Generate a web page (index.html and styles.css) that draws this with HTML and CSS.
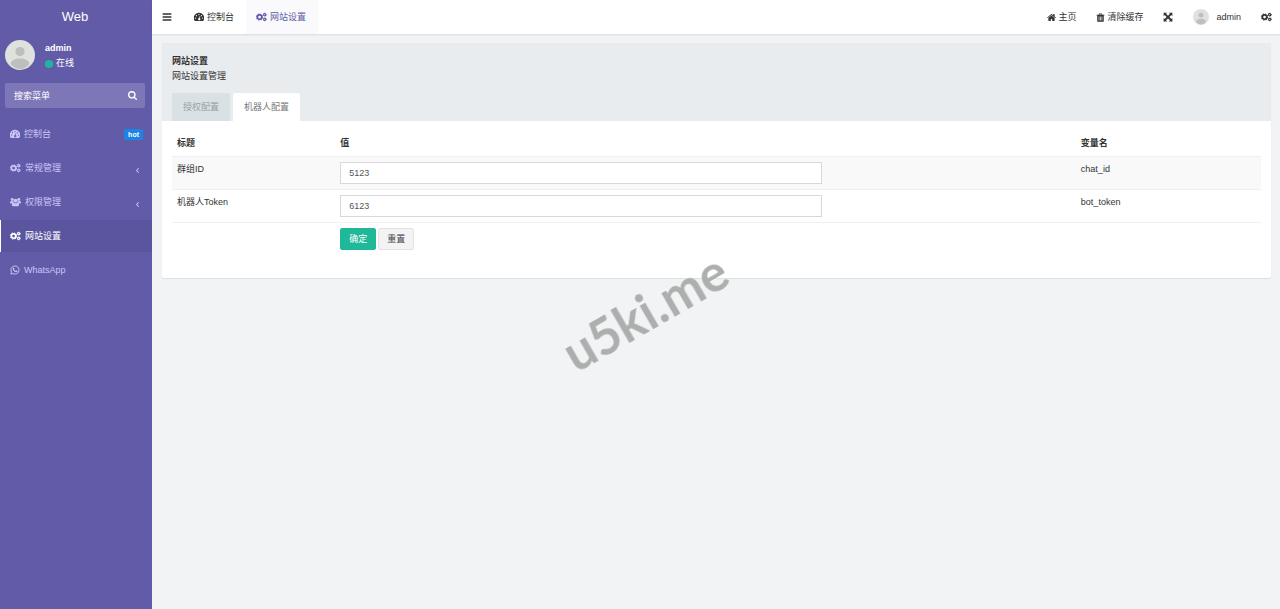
FILE: index.html
```
<!DOCTYPE html>
<html lang="zh-CN">
<head>
<meta charset="UTF-8">
<meta name="viewport" content="width=device-width, initial-scale=1.0">
<title>网站设置</title>
<link rel="stylesheet" href="styles.css">
</head>
<body>
<svg class="sprite" aria-hidden="true">
  <symbol id="i-bars" viewBox="0 0 16 16"><path d="M1 2h14v2.400H1zM1 6.800h14v2.400H1zM1 11.600h14V14H1z"/></symbol>
  <symbol id="i-dash" viewBox="0 0 18 16"><path fill-rule="evenodd" d="M9 .5a9 9 0 0 0-7.500 14.500h15A9 9 0 0 0 9 .5zM9 2.500a1.100 1.100 0 1 1 0 2.200 1.100 1.100 0 0 1 0-2.200zM4.500 4.500a1.100 1.100 0 1 1 0 2.200 1.100 1.100 0 0 1 0-2.200zM2.800 8.800a1.100 1.100 0 1 1 0 2.200 1.100 1.100 0 0 1 0-2.200zM15.200 8.800a1.100 1.100 0 1 1 0 2.200 1.100 1.100 0 0 1 0-2.200zM13.500 4.500a1.100 1.100 0 1 1 0 2.200 1.100 1.100 0 0 1 0-2.200zM10.300 6.200l1.100.3-.9 3.700a2 2 0 1 1-1.200-.3z"/></symbol>
  <symbol id="i-cogs" viewBox="0 0 20 16">
    <g fill="none" stroke="currentColor">
      <circle cx="6.500" cy="8" r="4" stroke-width="3"/>
      <circle cx="6.500" cy="8" r="5.500" stroke-width="2" stroke-dasharray="2.300 2.020"/>
      <circle cx="15.800" cy="3.800" r="2" stroke-width="2"/>
      <circle cx="15.800" cy="3.800" r="3.100" stroke-width="1.200" stroke-dasharray="1.500 1.740"/>
      <circle cx="15.800" cy="12.200" r="2" stroke-width="2"/>
      <circle cx="15.800" cy="12.200" r="3.100" stroke-width="1.200" stroke-dasharray="1.500 1.740"/>
    </g>
  </symbol>
  <symbol id="i-home" viewBox="64 128 1664 1536"><path d="M1472 992v480q0 26-19 45t-45 19h-384v-384h-256v384h-384q-26 0-45-19t-19-45v-480q0-1 .5-3t.5-3l575-474 575 474q1 2 1 6zm223-69l-62 74q-8 9-21 11h-3q-13 0-21-7l-692-577-692 577q-12 8-24 7-13-2-21-11l-62-74q-8-10-7-23.500t11-21.500l719-599q32-26 76-26t76 26l244 204v-195q0-14 9-23t23-9h192q14 0 23 9t9 23v408l219 182q10 8 11 21.500t-7 23.500z"/></symbol>
  <symbol id="i-trash" viewBox="0 0 16 16"><path fill-rule="evenodd" d="M5.500 1h5l.8 2H15v1.600h-1.200V14q0 1.500-1.300 1.500h-9Q2.200 15.500 2.200 14V4.600H1V3h3.700zM6.400 2.100L6.100 3h3.800l-.3-.9zM4.800 6.200v7h1.200v-7zM7.400 6.200v7h1.200v-7zM10 6.200v7h1.200v-7z"/></symbol>
  <symbol id="i-expand" viewBox="0 0 16 16"><path d="M1 1h5.600L4.900 2.700 8 5.800l3.100-3.100L9.400 1H15v5.600l-1.700-1.700L10.200 8l3.100 3.100L15 9.400V15H9.400l1.700-1.700L8 10.200l-3.100 3.100L6.600 15H1V9.400l1.700 1.700L5.800 8 2.700 4.900 1 6.600z"/></symbol>
  <symbol id="i-search" viewBox="64 128 1664 1664"><path d="M1216 832q0-185-131.500-316.500t-316.500-131.500-316.500 131.500-131.500 316.500 131.500 316.500 316.500 131.500 316.500-131.500 131.500-316.500zm512 832q0 52-38 90t-90 38q-54 0-90-38l-343-342q-179 124-399 124-143 0-273.500-55.500t-225-150-150-225-55.500-273.500 55.500-273.500 150-225 225-150 273.500-55.500 273.500 55.500 225 150 150 225 55.500 273.500q0 220-124 399l343 343q37 37 37 90z"/></symbol>
  <symbol id="i-users" viewBox="0 0 20 16"><circle cx="4" cy="3.500" r="2.700"/><circle cx="16" cy="3.500" r="2.700"/><circle cx="10" cy="5.500" r="3.600"/><path d="M0 9.500Q0 6 2 6q2 1 4 .4 0 1.600 1 2.800-2 0-3 1.500H1.500Q0 10.700 0 9.500zM20 9.500Q20 6 18 6q-2 1-4 .4 0 1.600-1 2.800 2 0 3 1.500h2.500q1.500 0 1.500-1.200zM3.600 13.600q0-4.300 2.900-4.300 3.500 2.200 7 0 2.900 0 2.900 4.300 0 2.200-2.200 2.200H5.800q-2.200 0-2.200-2.200z"/></symbol>
  <symbol id="i-whatsapp" viewBox="0 0 16 16"><path fill="none" stroke="currentColor" stroke-width="1.500" d="M1.400 14.600l.9-3.400A6.500 6.500 0 1 1 4.800 13.700z"/><path d="M5.400 4.300h.9l.8 1.900-.7 1q.9 1.600 2.600 2.300l.9-1 2 1q0 1.900-2 2.100-3.400-.3-5.400-4-.5-2.200.9-3.300z"/></symbol>
  <symbol id="i-left" viewBox="0 0 8 16"><path fill="none" stroke="currentColor" stroke-width="1.800" d="M6 4L2.500 8 6 12"/></symbol>
  <symbol id="i-avatar" viewBox="0 0 30 30"><circle cx="15" cy="15" r="15" fill="#dfe1df"/><circle cx="15" cy="11.500" r="4.600" fill="#bdbfbd"/><path fill="#bdbfbd" d="M5.500 24q1-5.500 9.500-5.500t9.500 5.500q-4 5-9.500 5t-9.500-5z"/></symbol>
</svg>

<div class="wrapper">
  <aside class="sidebar">
    <a class="logo" href="#">Web</a>
    <div class="user-panel">
      <svg class="avatar"><use href="#i-avatar"/></svg>
      <div class="user-info">
        <strong>admin</strong>
        <span class="status">在线</span>
      </div>
    </div>
    <form class="search">
      <input type="text" placeholder="搜索菜单" aria-label="搜索菜单">
      <button type="submit" aria-label="搜索"><svg class="icon icon-sm"><use href="#i-search"/></svg></button>
    </form>
    <nav class="menu">
      <a href="#"><svg class="icon"><use href="#i-dash"/></svg>控制台<span class="badge">hot</span></a>
      <a href="#"><svg class="icon icon-lg"><use href="#i-cogs"/></svg>常规管理<svg class="arrow"><use href="#i-left"/></svg></a>
      <a href="#"><svg class="icon icon-lg"><use href="#i-users"/></svg>权限管理<svg class="arrow"><use href="#i-left"/></svg></a>
      <a href="#" class="active"><svg class="icon icon-lg"><use href="#i-cogs"/></svg>网站设置</a>
      <a href="#"><svg class="icon"><use href="#i-whatsapp"/></svg>WhatsApp</a>
    </nav>
  </aside>

  <div class="main">
    <header class="navbar">
      <button class="toggle" aria-label="菜单"><svg class="icon"><use href="#i-bars"/></svg></button>
      <nav class="nav-tabs">
        <a href="#"><svg class="icon"><use href="#i-dash"/></svg>控制台</a>
        <a href="#" class="active"><svg class="icon icon-lg"><use href="#i-cogs"/></svg>网站设置</a>
      </nav>
      <nav class="nav-right">
        <a href="#"><svg class="icon icon-sm"><use href="#i-home"/></svg>主页</a>
        <a href="#"><svg class="icon icon-sm"><use href="#i-trash"/></svg>清除缓存</a>
        <a href="#" aria-label="全屏"><svg class="icon"><use href="#i-expand"/></svg></a>
        <a href="#" class="account"><svg class="avatar-sm"><use href="#i-avatar"/></svg>admin</a>
        <a href="#" aria-label="设置"><svg class="icon icon-lg"><use href="#i-cogs"/></svg></a>
      </nav>
    </header>

    <main class="panel">
      <div class="panel-heading">
        <div class="panel-lead"><strong>网站设置</strong><br>网站设置管理</div>
        <div class="tabs">
          <a href="#">授权配置</a>
          <a href="#" class="active">机器人配置</a>
        </div>
      </div>
      <form class="panel-body">
        <table>
          <thead>
            <tr>
              <th class="col-title">标题</th>
              <th class="col-value">值</th>
              <th>变量名</th>
            </tr>
          </thead>
          <tbody>
            <tr>
              <td><label for="chat_id">群组ID</label></td>
              <td><input type="text" id="chat_id" value="5123"></td>
              <td>chat_id</td>
            </tr>
            <tr>
              <td><label for="bot_token">机器人Token</label></td>
              <td><input type="text" id="bot_token" value="6123"></td>
              <td>bot_token</td>
            </tr>
          </tbody>
          <tfoot>
            <tr>
              <td></td>
              <td>
                <div class="actions">
                  <button type="submit" class="btn btn-success">确定</button>
                  <button type="reset" class="btn">重置</button>
                </div>
              </td>
              <td></td>
            </tr>
          </tfoot>
        </table>
      </form>
    </main>
  </div>
</div>
<div class="watermark">u5ki.me</div>
</body>
</html>
```
FILE: styles.css
```
* {
  box-sizing: border-box;
}
body {
  margin: 0;
  font-family: "Liberation Sans", "Noto Sans CJK SC", sans-serif;
  font-size: 9px;
  line-height: 15px;
  color: #333;
  background-color: #f1f3f5;
}
a {
  color: inherit;
  text-decoration: none;
}
button, input {
  font: inherit;
}
.sprite {
  display: none;
}
.icon {
  width: 10px;
  height: 10px;
  fill: currentColor;
  flex: none;
}
.icon-sm {
  width: 9px;
  height: 9px;
}
.icon-lg {
  width: 11px;
}
.wrapper {
  display: flex;
  min-height: 100vh;
}

/* sidebar */
.sidebar {
  flex: 0 0 152px;
  min-width: 0;
  color: #fff;
  background-color: #625ca8;
}
.logo {
  display: block;
  padding-right: 2px;
  font-size: 13px;
  line-height: 34px;
  text-align: center;
}
.user-panel {
  display: flex;
  gap: 10px;
  padding: 6px 5px 13px;
}
.avatar {
  width: 30px;
  height: 30px;
}
.user-info {
  display: flex;
  flex-direction: column;
  height: 30px;
  padding-top: 1px;
}
.status {
  display: flex;
  align-items: center;
  gap: 3px;
}
.status::before {
  content: "";
  width: 8px;
  height: 8px;
  border-radius: 50%;
  background-color: #20b5a0;
}
.search {
  display: flex;
  height: 25px;
  margin: 0 7px 10px 5px;
  border-radius: 2px;
  background-color: #7d77b8;
}
.search input {
  flex: 1;
  width: 100%;
  min-width: 0;
  padding: 1px 9px 0;
  border: none;
  color: #fff;
  background: none;
}
.search input::placeholder {
  color: #fff;
  opacity: 1;
}
.search button {
  display: flex;
  align-items: center;
  padding: 0 8px;
  border: none;
  color: #fff;
  background: none;
}
.menu a {
  display: flex;
  align-items: center;
  gap: 4px;
  height: 32px;
  margin-bottom: 2px;
  padding: 0 9px;
  border-left: 1px solid transparent;
  color: #cbc4fa;
}
.menu a.active {
  color: #fff;
  border-left-color: #fff;
  background-color: #5b559f;
}
.badge {
  margin-left: auto;
  padding: 0 4px;
  border-radius: 2px;
  font-size: 7px;
  font-weight: bold;
  line-height: 11px;
  color: #fff;
  background-color: #1c84e4;
}
.arrow {
  width: 5px;
  height: 9px;
  margin: 5px 3px 0 auto;
}

/* top bar */
.main {
  flex: 1;
  min-width: 0;
}
.navbar {
  display: flex;
  height: 34px;
  background-color: #fff;
  box-shadow: 0 1px 2px rgba(0, 0, 0, 0.1);
}
.navbar a, .toggle {
  display: flex;
  align-items: center;
  gap: 2px;
  padding: 0 10px;
  border: none;
  color: #333;
  background: none;
}
.navbar .toggle {
  padding-right: 12px;
}
.nav-tabs, .nav-right {
  display: flex;
}
.navbar .nav-tabs a {
  gap: 3px;
  padding: 0 12px 0 10px;
}
.navbar .nav-tabs .active {
  color: #605ca8;
  background-color: #fafafc;
}
.nav-right {
  margin-left: auto;
}
.navbar .nav-right a:last-child {
  padding-right: 8px;
}
.navbar .nav-right .account {
  gap: 7px;
}
.avatar-sm {
  width: 16px;
  height: 16px;
}

/* settings panel */
.panel {
  margin: 9px 9px 0 10px;
  background-color: #fff;
  border-radius: 2px;
  box-shadow: 0 1px 1px rgba(0, 0, 0, 0.08);
}
.panel-heading {
  padding: 11px 10px 0;
  background-color: #e8ecef;
}
.tabs {
  display: flex;
  gap: 3px;
  margin-top: 9px;
}
.tabs a {
  padding: 0 11px;
  border-radius: 2px 2px 0 0;
  line-height: 28px;
  color: #95a3a7;
  background-color: #d9e1e4;
}
.tabs a.active {
  color: #777;
  background-color: #fff;
}
.panel-body {
  padding: 10px 10px 23px;
}
table {
  width: 100%;
  table-layout: fixed;
  border-collapse: collapse;
}
th, td {
  padding: 5px;
  text-align: left;
  vertical-align: top;
}
tbody tr {
  border-top: 1px solid #f0f0f0;
  border-bottom: 1px solid #f0f0f0;
}
tbody tr:first-child {
  background-color: #f9f9f9;
}
.col-title {
  width: 15%;
}
.col-value {
  width: 68%;
}
td input {
  display: block;
  width: 66%;
  height: 22px;
  padding: 0 8px;
  border: 1px solid #d8d8dc;
  color: #555;
  background-color: #fff;
}
.actions {
  display: flex;
  gap: 2px;
}
.btn {
  height: 22px;
  padding: 0 8px;
  border: 1px solid #e2e2e4;
  border-radius: 2px;
  line-height: 20px;
  color: #444;
  background-color: #f3f3f4;
}
.btn-success {
  border-color: #1fb899;
  color: #fff;
  background-color: #1fb899;
}

.watermark {
  position: fixed;
  top: 312px;
  left: 645px;
  font-family: Lato, "Open Sans", sans-serif;
  font-size: 51px;
  font-weight: bold;
  line-height: 60px;
  color: #adaeae;
  transform: translate(-50%, -50%) rotate(-30deg);
  pointer-events: none;
}
```
